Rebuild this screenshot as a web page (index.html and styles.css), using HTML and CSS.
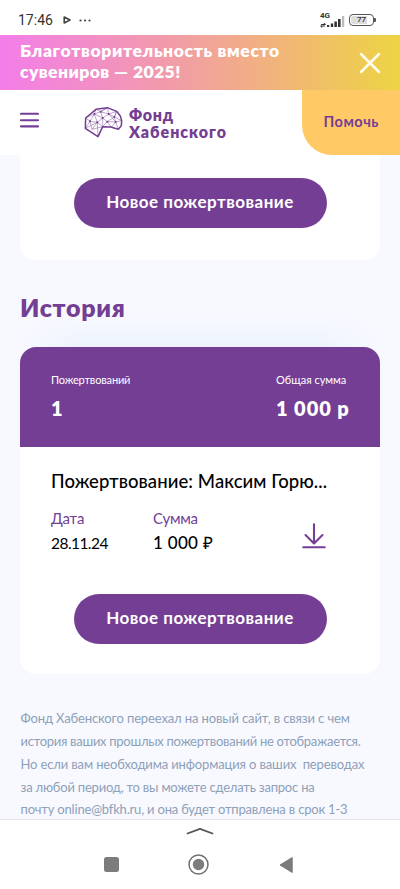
FILE: index.html
```html
<!DOCTYPE html>
<html lang="ru">
<head>
<meta charset="utf-8">
<meta name="viewport" content="width=device-width, initial-scale=1">
<title>Фонд Хабенского</title>
<link rel="stylesheet" href="styles.css">
</head>
<body>
<div class="screen">
  <div class="status">
    <span class="clock">17:46</span>
    <svg class="status-play" viewBox="0 0 8 8"><path d="M1.200 1 7 4 1.200 7Z" fill="none" stroke="#444" stroke-width="1.600" stroke-linejoin="round"/></svg>
    <svg class="status-dots" viewBox="0 0 12 3"><g fill="#444"><circle cx="1.500" cy="1.500" r="1.100"/><circle cx="6" cy="1.500" r="1.100"/><circle cx="10.500" cy="1.500" r="1.100"/></g></svg>
    <div class="network">
      <span class="net-type">4G</span>
      <svg class="signal" viewBox="0 0 26 13"><g fill="#333"><path d="M1 9.500h4l-1-1.300M5 11H1l1 1.300" fill="none" stroke="#333" stroke-width="1.100"/><rect x="7" y="10" width="2.200" height="2"/><rect x="10.800" y="8.500" width="2.400" height="3.500"/><rect x="14.400" y="6.500" width="2.500" height="5.500"/><rect x="18" y="4" width="2.600" height="8"/><rect x="22" y="1" width="2.200" height="11" fill="#bbb"/></g></svg>
    </div>
    <div class="battery"><span>77</span></div>
    <i class="battery-tip"></i>
  </div>

  <div class="banner">
    <p><span class="banner-a">Благотворительность вместо</span><br><span class="banner-b">сувениров — 2025!</span></p>
    <svg class="close" viewBox="0 0 22 22"><path d="M2 2l18 18M20 2l-18 18" stroke="#fffdf0" stroke-width="2.500" stroke-linecap="round"/></svg>
  </div>

  <header class="header">
    <svg class="menu" viewBox="0 0 19 16"><path d="M1 1.800h17M1 8.200h17M1 14.400h17" stroke="#743e94" stroke-width="2.100" stroke-linecap="round"/></svg>
    <svg class="brain" viewBox="252 54 120 96">
      <g fill="none" stroke="#743e94" stroke-linejoin="round">
        <path stroke-width="2" opacity=".7" d="M257 90 283 78 288 64 302 71 322 59 326 78 350 70 343 87 365 98 347 102 326 78 302 71 283 78 270 100 257 90M256 121 270 100 292 103 308 90 283 78 292 103 256 121M308 90 302 71M308 90 326 78 343 87 322 101 308 90 308 116 292 103 294 146M308 116 322 101 347 102 355 124M322 101 334 118 347 102 343 87 350 70M276 124 270 100M276 124 292 103M276 124 308 116M322 59 302 71"/>
        <path stroke-width="4.500" d="M257 90 288 64 322 59 350 70 361 84 365 98 364 113 355 124 332 117 308 116 294 146 256 121Z"/>
      </g>
      <g fill="#743e94"><circle cx="283" cy="78" r="3"/><circle cx="302" cy="71" r="3"/><circle cx="326" cy="78" r="3"/><circle cx="343" cy="87" r="3"/><circle cx="308" cy="90" r="3"/><circle cx="270" cy="100" r="3"/><circle cx="292" cy="103" r="3"/><circle cx="322" cy="101" r="3"/><circle cx="347" cy="102" r="3"/></g>
    </svg>
    <div class="logo-text"><span class="logo-a">Фонд</span><span class="logo-b">Хабенского</span></div>
    <a class="help"><span>Помочь</span></a>
  </header>

  <main class="content">
    <section class="card card-top"><a class="button"><span>Новое пожертвование</span></a></section>
    <h2 class="heading"><span>История</span></h2>
    <div class="glow"></div>
    <section class="card card-history">
      <div class="summary">
        <div><span class="sum-label label-a">Пожертвований</span><span class="sum-value">1</span></div>
        <div class="total"><span class="sum-label label-b">Общая сумма</span><span class="sum-value value-b">1 000 р</span></div>
      </div>
      <div class="donation">
        <h3><span>Пожертвование: Максим Горю...</span></h3>
        <div class="details">
          <div class="date"><span class="key key-a">Дата</span><span class="val val-a">28.11.24</span></div>
          <div class="amount"><span class="key key-b">Сумма</span><span class="val val-b">1 000 ₽</span></div>
          <svg class="download" viewBox="0 0 24 26"><path d="M12 1.200v19M3.500 12l8.500 8.500L20.500 12M1.300 24.200h21.400" fill="none" stroke="#743e94" stroke-width="2.100" stroke-linecap="round" stroke-linejoin="round"/></svg>
        </div>
      </div>
      <a class="button"><span>Новое пожертвование</span></a>
    </section>
    <p class="note"><span class="n1">Фонд Хабенского переехал на новый сайт, в связи с чем</span><span class="n2">история ваших прошлых пожертвований не отображается.</span><span class="n3">Но если вам необходима информация о ваших&nbsp; переводах</span><span class="n4">за любой период, то вы можете сделать запрос на</span><span class="n5">почту online@bfkh.ru, и она будет отправлена в срок 1-3</span></p>
  </main>

  <nav class="nav">
    <svg class="chevron" viewBox="0 0 28 8"><path d="M1.500 6.500 14 1.800 26.500 6.500" fill="none" stroke="#555" stroke-width="1.800" stroke-linecap="round" stroke-linejoin="round"/></svg>
    <div class="keys">
      <svg class="key-recent" viewBox="0 0 15 15"><rect width="15" height="15" rx="2.500" fill="#7c7c7c"/></svg>
      <svg class="key-home" viewBox="0 0 21 21"><circle cx="10.500" cy="10.500" r="9.500" fill="none" stroke="#707070" stroke-width="1.500"/><circle cx="10.500" cy="10.500" r="5.700" fill="#7c7c7c"/></svg>
      <svg class="key-back" viewBox="0 0 14 18"><path d="M13.200 1.500v15L1 9Z" fill="#7c7c7c" stroke="#7c7c7c" stroke-linejoin="round"/></svg>
    </div>
  </nav>
</div>
</body>
</html>
```
FILE: styles.css
```css
* { box-sizing: border-box; margin: 0; padding: 0; }
body { width: 400px; height: 889px; overflow: hidden; background: #fff; font-family: Lato, "Open Sans", sans-serif; }
svg { display: block; flex: none; }
span { white-space: nowrap; }
.screen { width: 400px; height: 889px; display: flex; flex-direction: column; overflow: hidden; }

.status { height: 35px; flex: none; display: flex; align-items: center; padding: 5px 24px 0 18px; color: #333; font-family: Roboto, sans-serif; }
.clock { font-size: 14px; width: 45px; }
.status-play { width: 8px; height: 8px; }
.status-dots { width: 12px; height: 3px; margin-left: 8px; }
.network { margin-left: auto; width: 26px; height: 16px; display: grid; }
.network > * { grid-area: 1 / 1; }
.net-type { font-size: 8px; line-height: 8px; font-weight: 700; }
.signal { width: 26px; height: 13px; align-self: end; }
.battery { width: 25px; height: 12px; margin-left: 3px; border: 1.5px solid #555; border-radius: 4px; background: linear-gradient(90deg, #ddd 75%, #fff 75%); background-clip: content-box; padding: 1px; display: flex; align-items: center; justify-content: center; font-size: 8px; line-height: 8px; font-weight: 500; }
.battery-tip { width: 2px; height: 4px; background: #555; border-radius: 0 1px 1px 0; }

.banner { height: 55px; flex: none; display: flex; justify-content: space-between; padding: 5px 19px 0 20px; background: linear-gradient(90deg, #f37ee9 0%, #f19baa 42%, #f1b579 70%, #edd443 100%); color: #fff; font-weight: 800; font-size: 17.5px; line-height: 21px; }
.banner-a { letter-spacing: 0.64px; }
.banner-b { letter-spacing: 0.42px; }
.close { width: 22px; height: 22px; margin-top: 11.5px; }

.header { height: 65px; flex: none; display: flex; background: #fff; color: #743e94; font-weight: 700; }
.menu { width: 19px; height: 16px; margin: 22px 0 0 20px; }
.brain { width: 40px; height: 32px; margin: 16px 0 0 45px; }
.logo-text { margin: 16px 0 0 5px; display: flex; flex-direction: column; font-size: 16px; line-height: 17px; font-weight: 800; }
.logo-a { letter-spacing: 0.7px; }
.logo-b { letter-spacing: 0.95px; }
.help { width: 98.5px; height: 65px; margin-left: auto; padding-left: 22px; background: #ffc966; border-radius: 0 0 0 30px; font-size: 14.5px; line-height: 64px; letter-spacing: 0.5px; }

.content { height: 664px; flex: none; overflow: hidden; background: #f8f9ff; padding: 0 20px; }
.card { background: #fff; display: flex; flex-direction: column; align-items: center; }
.card-top { height: 105px; padding-top: 22.5px; border-radius: 0 0 16px 16px; }
.button { width: 253px; height: 50px; border-radius: 25px; background: #743e94; color: #fff; font-weight: 700; font-size: 17px; line-height: 48px; text-align: center; letter-spacing: 0.5px; }
.heading { height: 56px; padding-top: 32px; color: #743e94; font-size: 25px; line-height: 30px; font-weight: 800; letter-spacing: 0.7px; }
.glow { height: 31px; background: linear-gradient(90deg, #f8f9ff, transparent 15%, transparent 85%, #f8f9ff), linear-gradient(#f8f9ff, #edf3fe); }
.card-history { height: 327px; border-radius: 16px; overflow: hidden; }
.summary { width: 100%; height: 100px; background: #743e94; color: #fff; padding: 26px 30px 0 31px; display: flex; justify-content: space-between; }
.summary > div { display: flex; flex-direction: column; }
.total { width: 74px; }
.sum-label { font-size: 11px; line-height: 14px; }
.label-a { letter-spacing: -0.15px; }
.sum-value { margin-top: 8px; font-size: 20px; line-height: 26px; font-weight: 800; }
.value-b { letter-spacing: 0.95px; }
.donation { width: 100%; height: 147px; padding: 21px 31px 0; color: #000; }
.donation h3 { font-size: 18.5px; line-height: 26px; font-weight: 500; letter-spacing: 0.08px; }
.details { display: flex; margin-top: 14px; }
.details > div { display: flex; flex-direction: column; }
.date { width: 102px; }
.amount { width: 148.5px; }
.key { color: #743e94; font-size: 15px; line-height: 20px; }
.key-a { letter-spacing: -0.2px; }
.key-b { letter-spacing: -0.3px; }
.val { margin-top: 4px; font-size: 15.5px; line-height: 22px; }
.val-a { letter-spacing: -0.55px; }
.val-b { font-weight: 500; font-size: 17px; letter-spacing: 0.3px; }
.download { width: 24px; height: 26px; margin-top: 15px; }
.note { margin: 33px 0 0 0.5px; color: #8da0b8; font-size: 13px; line-height: 22.85px; }
.note span { display: block; }
.n1 { letter-spacing: -0.13px; }
.n2 { letter-spacing: -0.28px; }
.n3 { letter-spacing: -0.14px; }
.n4 { letter-spacing: -0.21px; }
.n5 { letter-spacing: -0.19px; }

.nav { height: 70px; flex: none; border-top: 1px solid #e6e7ec; display: flex; flex-direction: column; align-items: center; background: #fff; }
.chevron { width: 28px; height: 8px; margin-top: 7px; }
.keys { width: 189px; height: 21px; margin: 19px 0 0 -4px; display: flex; align-items: center; justify-content: space-between; }
.key-recent { width: 15px; height: 15px; }
.key-home { width: 21px; height: 21px; }
.key-back { width: 14px; height: 18px; }
```
